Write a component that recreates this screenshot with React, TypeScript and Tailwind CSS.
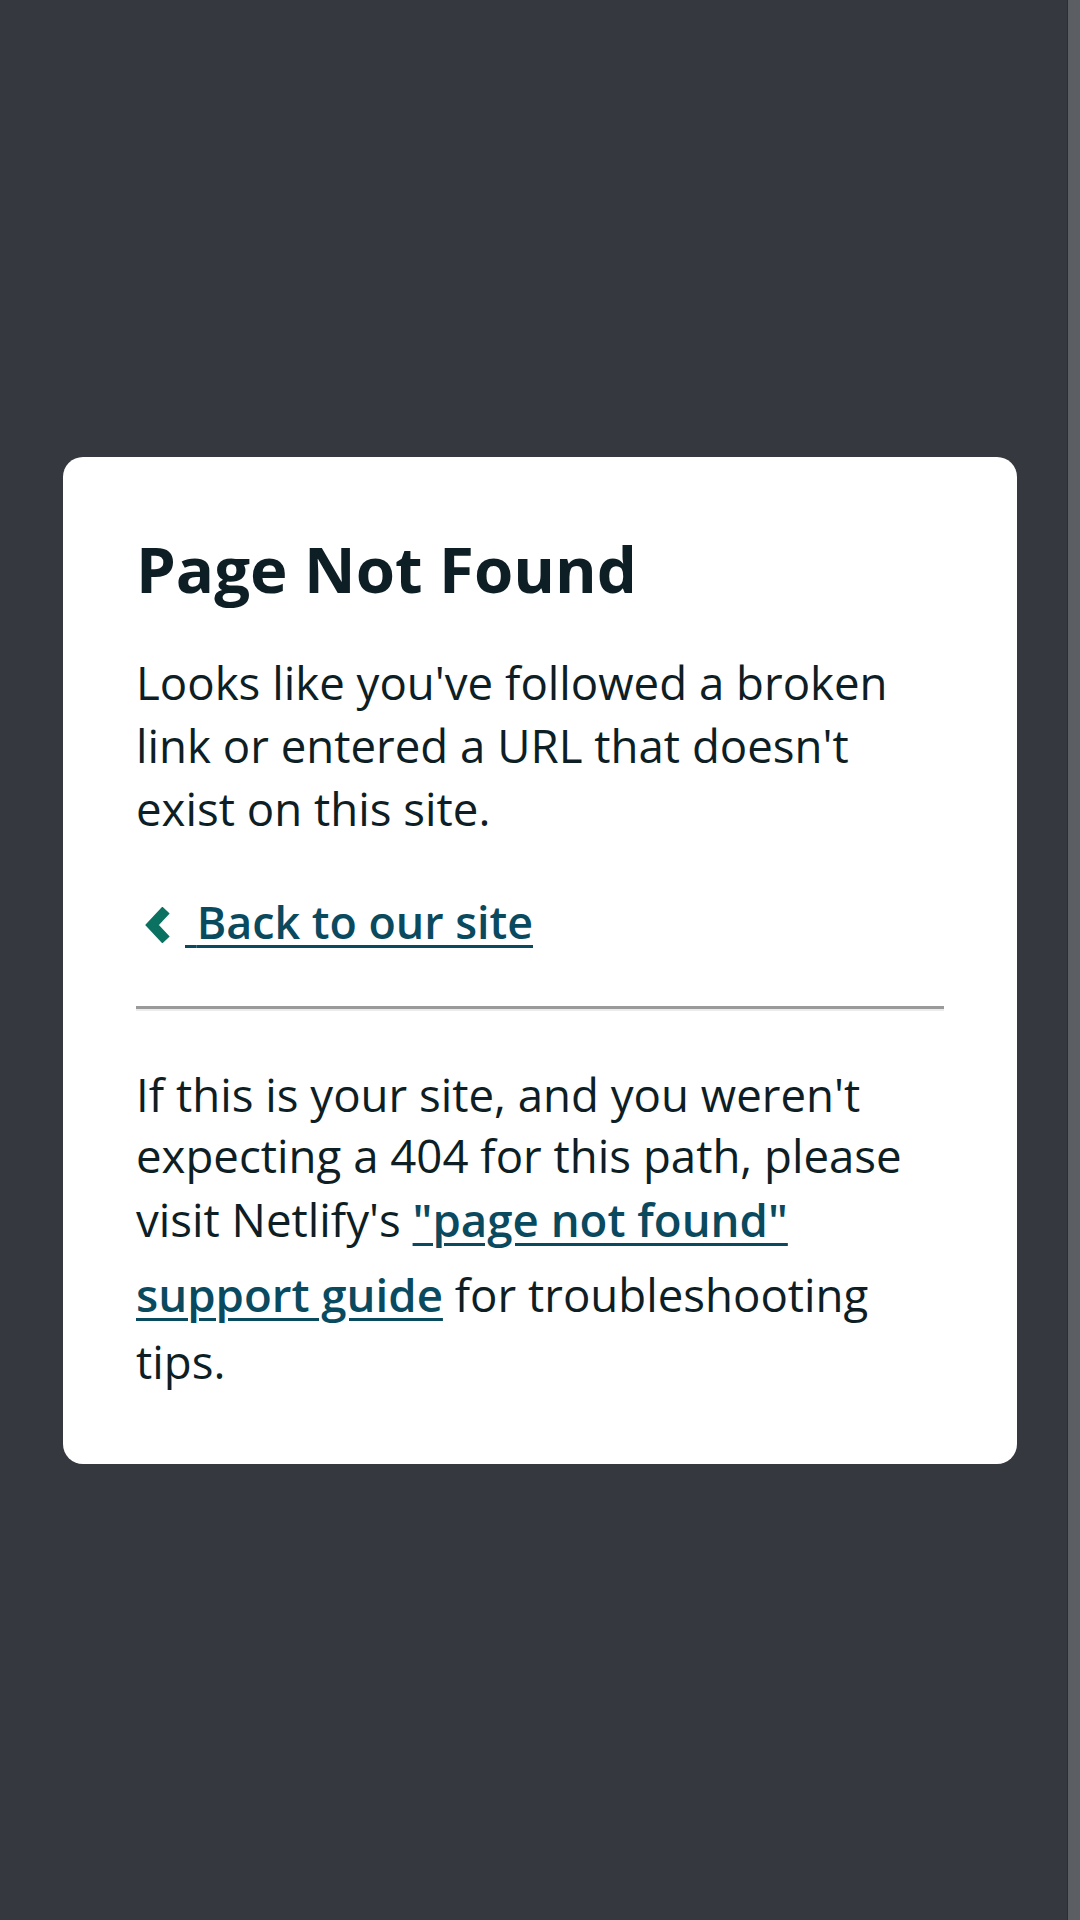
export default function App() {
  return (
    <div className="relative flex h-[1920px] w-full items-center justify-center bg-[#35383f] font-['Open_Sans',sans-serif] text-[#0e1e25]">
      <div className="w-[954px] rounded-[20px] bg-white px-[73px] pb-[71px] pt-[77px]">
        <h1 className="text-[63.5px] font-bold leading-[70px]">Page Not Found</h1>

        <p className="mt-[47px] text-[45.6px] leading-[63px]">
          Looks like you've followed a broken
          <br />
          link or entered a URL that doesn't
          <br />
          exist on this site.
        </p>

        <p className="mt-[50px] text-[45.6px] leading-[63px]">
          <a href="#" className="text-[44.8px] font-semibold text-[#0a4a5f]">
            <svg
              viewBox="0 0 26 36"
              className="ml-[9px] mr-[14px] inline-block h-[36px] w-[26px] align-[-4px]"
            >
              <polyline
                points="21,3 7,18 21,33"
                fill="none"
                stroke="#0b7262"
                strokeWidth="10"
              />
            </svg>
            <span className="underline decoration-[3px] underline-offset-[6px]">
              {"\u00a0"}Back to our site
            </span>
          </a>
        </p>

        <hr className="mt-[53px] border-0 border-t-[3px] border-b-2 border-t-[#9a9a9a] border-b-[#ececec]" />

        <div className="mt-[52px] text-[45.6px] leading-[63px]">
          <span className="block">If this is your site, and you weren't</span>
          <span className="-mt-[2px] block">expecting a 404 for this path, please</span>
          <span className="mt-px block">
            visit Netlify's{" "}
            <a
              href="#"
              className="font-semibold text-[#0a4a5f] underline decoration-[3px] underline-offset-[6px]"
            >
              "page not found"
            </a>
          </span>
          <span className="mt-[12px] block">
            <a
              href="#"
              className="font-semibold text-[#0a4a5f] underline decoration-[3px] underline-offset-[6px]"
            >
              support guide
            </a>{" "}
            for troubleshooting
          </span>
          <span className="mt-[4px] block">tips.</span>
        </div>
      </div>

      {/* scrollbar track */}
      <div className="absolute right-0 top-0 h-full w-[13px] border-l border-[#2c2e31] bg-[#5b5e62]" />
    </div>
  );
}
